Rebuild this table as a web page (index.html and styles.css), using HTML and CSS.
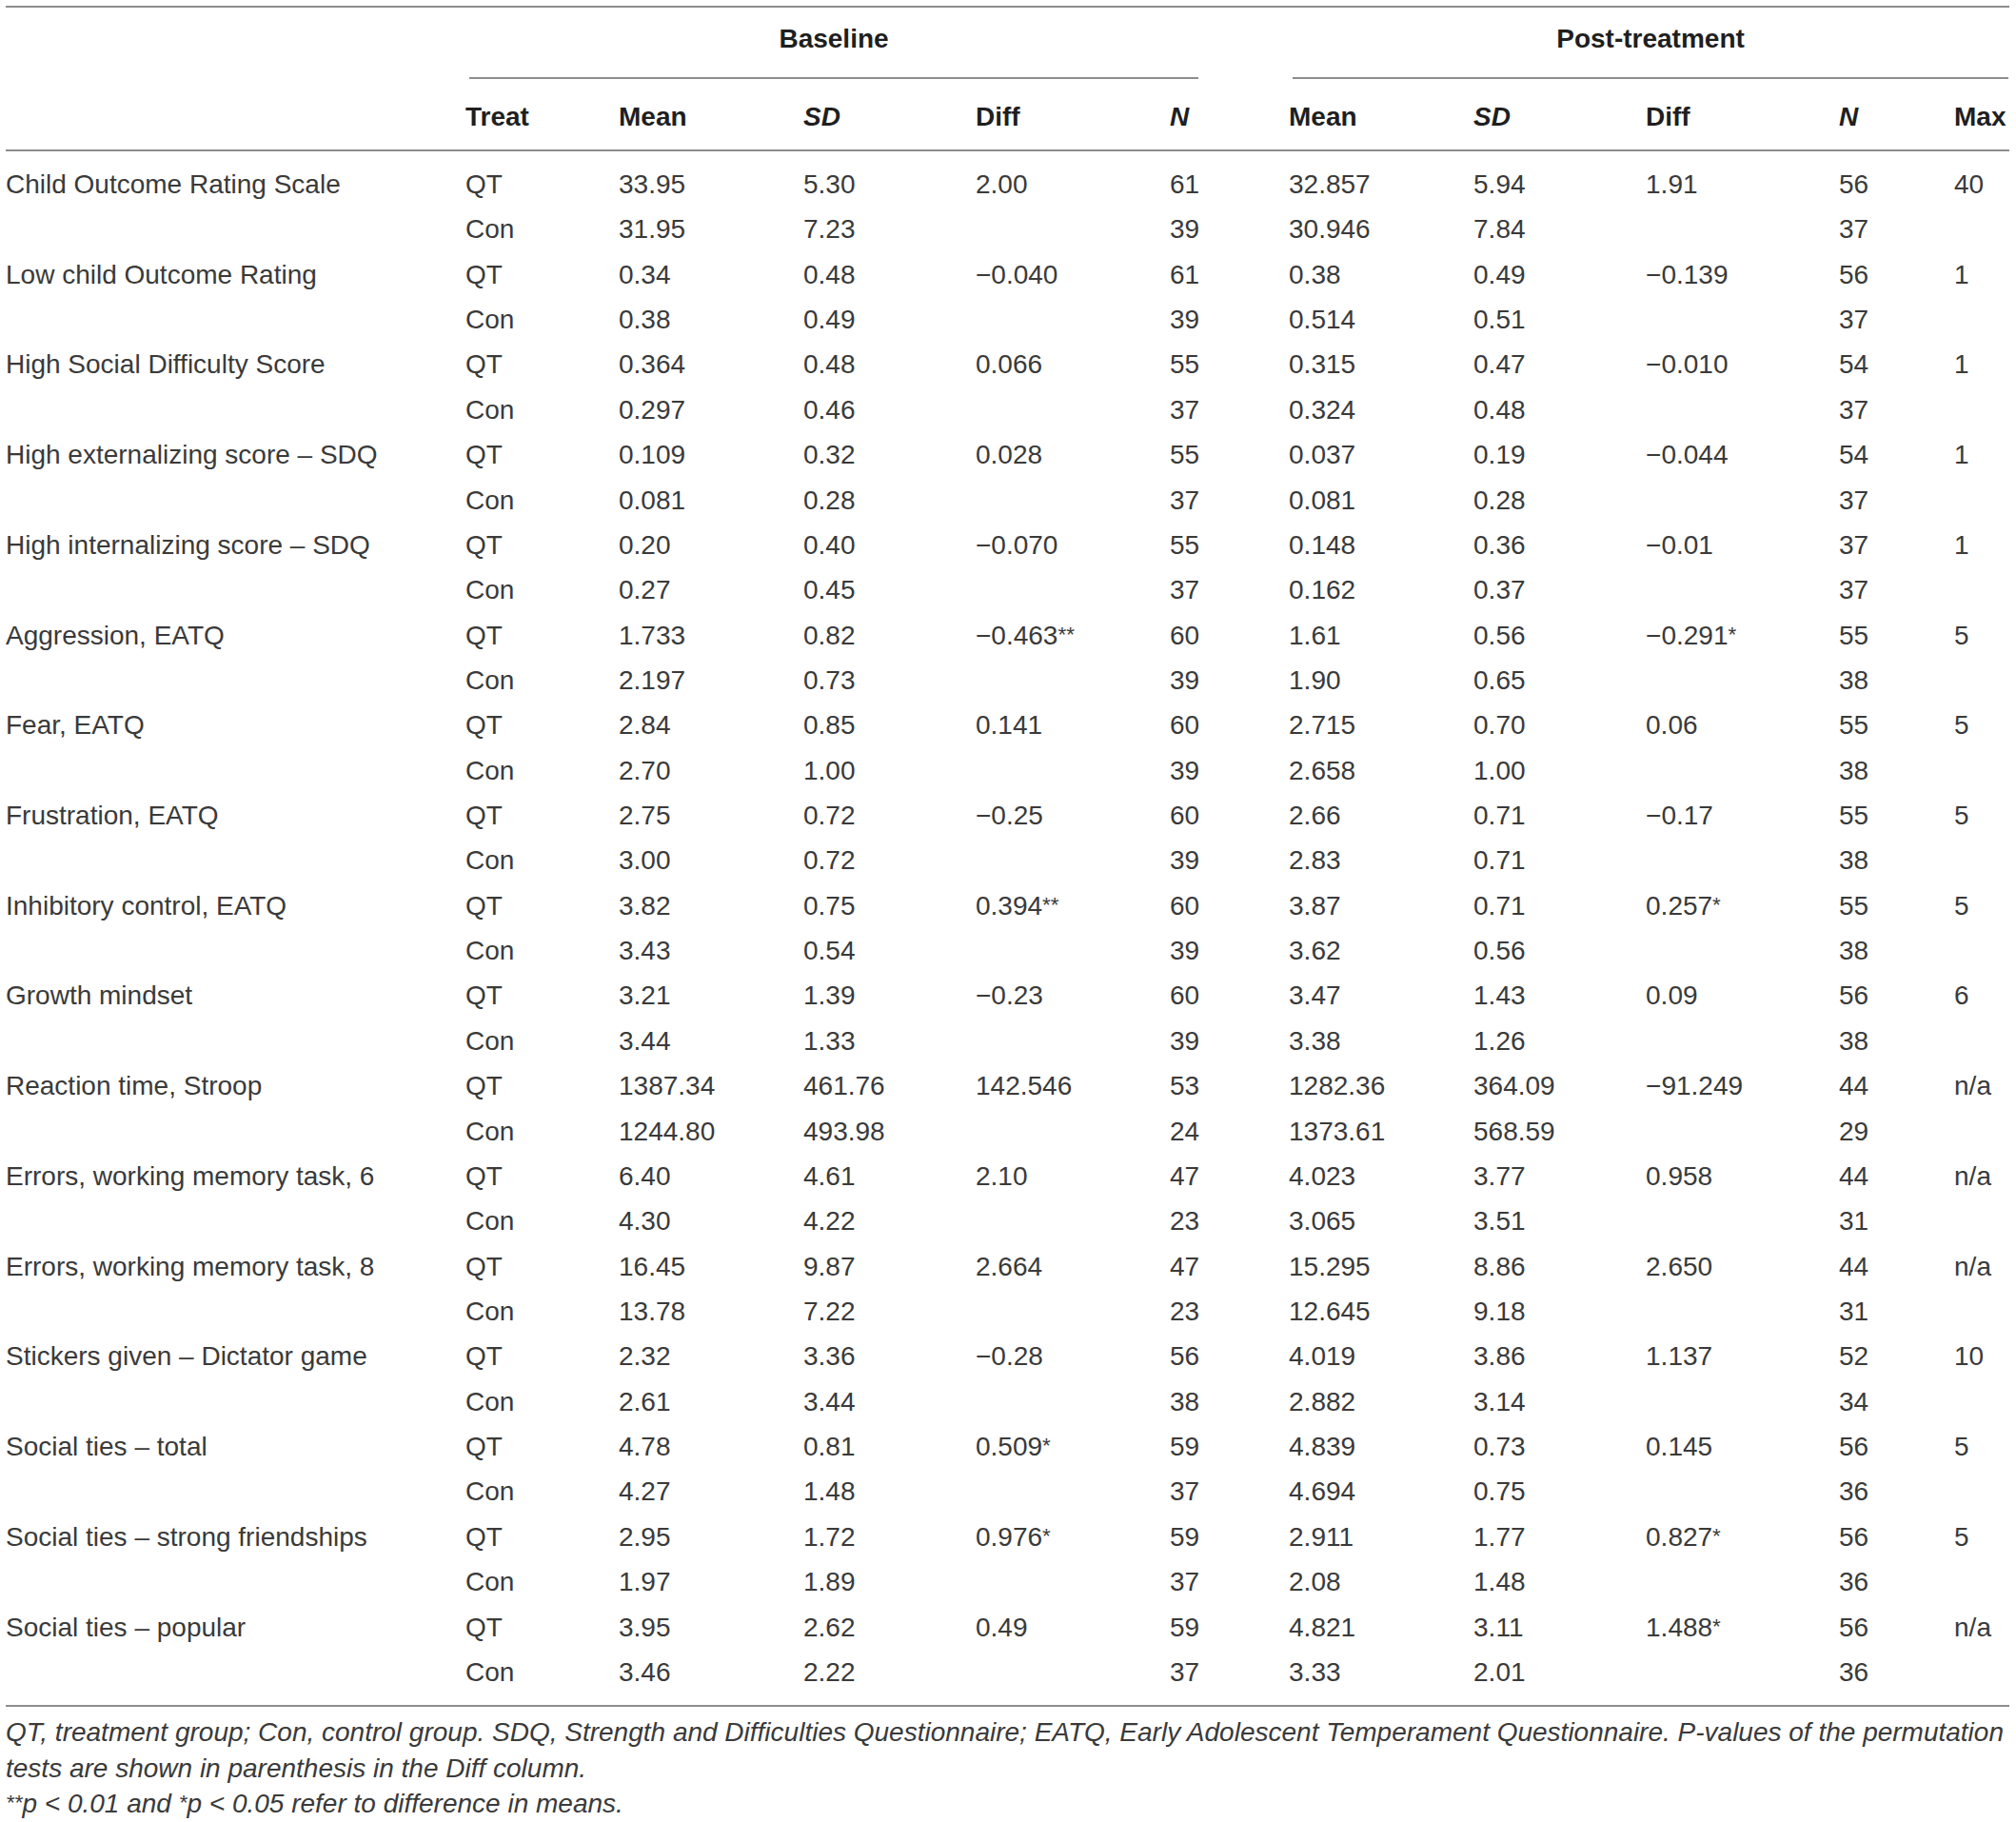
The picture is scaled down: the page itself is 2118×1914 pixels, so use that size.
FILE: index.html
```html
<!DOCTYPE html>
<html lang="en">
<head>
<meta charset="utf-8">
<title>Table</title>
<link rel="stylesheet" href="styles.css">
</head>
<body>
<table class="tbl">
  <colgroup>
    <col class="c-label"><col class="c-treat"><col class="c-mean"><col class="c-sd"><col class="c-diff"><col class="c-n">
    <col class="c-mean"><col class="c-sd"><col class="c-pdiff"><col class="c-pn"><col class="c-max">
  </colgroup>
  <thead>
    <tr class="grp">
      <th></th>
      <th colspan="5"><div class="grp-line grp-base">Baseline</div></th>
      <th colspan="5"><div class="grp-line grp-post">Post-treatment</div></th>
    </tr>
    <tr class="hdr">
      <th></th><th>Treat</th><th>Mean</th><th><i>SD</i></th><th>Diff</th><th><i>N</i></th>
      <th>Mean</th><th><i>SD</i></th><th>Diff</th><th><i>N</i></th><th>Max</th>
    </tr>
  </thead>
  <tbody>
    <tr class="first"><td>Child Outcome Rating Scale</td><td>QT</td><td>33.95</td><td>5.30</td><td>2.00</td><td>61</td><td>32.857</td><td>5.94</td><td>1.91</td><td>56</td><td>40</td></tr>
    <tr><td></td><td>Con</td><td>31.95</td><td>7.23</td><td></td><td>39</td><td>30.946</td><td>7.84</td><td></td><td>37</td><td></td></tr>
    <tr><td>Low child Outcome Rating</td><td>QT</td><td>0.34</td><td>0.48</td><td>−0.040</td><td>61</td><td>0.38</td><td>0.49</td><td>−0.139</td><td>56</td><td>1</td></tr>
    <tr><td></td><td>Con</td><td>0.38</td><td>0.49</td><td></td><td>39</td><td>0.514</td><td>0.51</td><td></td><td>37</td><td></td></tr>
    <tr><td>High Social Difficulty Score</td><td>QT</td><td>0.364</td><td>0.48</td><td>0.066</td><td>55</td><td>0.315</td><td>0.47</td><td>−0.010</td><td>54</td><td>1</td></tr>
    <tr><td></td><td>Con</td><td>0.297</td><td>0.46</td><td></td><td>37</td><td>0.324</td><td>0.48</td><td></td><td>37</td><td></td></tr>
    <tr><td>High externalizing score – SDQ</td><td>QT</td><td>0.109</td><td>0.32</td><td>0.028</td><td>55</td><td>0.037</td><td>0.19</td><td>−0.044</td><td>54</td><td>1</td></tr>
    <tr><td></td><td>Con</td><td>0.081</td><td>0.28</td><td></td><td>37</td><td>0.081</td><td>0.28</td><td></td><td>37</td><td></td></tr>
    <tr><td>High internalizing score – SDQ</td><td>QT</td><td>0.20</td><td>0.40</td><td>−0.070</td><td>55</td><td>0.148</td><td>0.36</td><td>−0.01</td><td>37</td><td>1</td></tr>
    <tr><td></td><td>Con</td><td>0.27</td><td>0.45</td><td></td><td>37</td><td>0.162</td><td>0.37</td><td></td><td>37</td><td></td></tr>
    <tr><td>Aggression, EATQ</td><td>QT</td><td>1.733</td><td>0.82</td><td>−0.463<sup>**</sup></td><td>60</td><td>1.61</td><td>0.56</td><td>−0.291<sup>*</sup></td><td>55</td><td>5</td></tr>
    <tr><td></td><td>Con</td><td>2.197</td><td>0.73</td><td></td><td>39</td><td>1.90</td><td>0.65</td><td></td><td>38</td><td></td></tr>
    <tr><td>Fear, EATQ</td><td>QT</td><td>2.84</td><td>0.85</td><td>0.141</td><td>60</td><td>2.715</td><td>0.70</td><td>0.06</td><td>55</td><td>5</td></tr>
    <tr><td></td><td>Con</td><td>2.70</td><td>1.00</td><td></td><td>39</td><td>2.658</td><td>1.00</td><td></td><td>38</td><td></td></tr>
    <tr><td>Frustration, EATQ</td><td>QT</td><td>2.75</td><td>0.72</td><td>−0.25</td><td>60</td><td>2.66</td><td>0.71</td><td>−0.17</td><td>55</td><td>5</td></tr>
    <tr><td></td><td>Con</td><td>3.00</td><td>0.72</td><td></td><td>39</td><td>2.83</td><td>0.71</td><td></td><td>38</td><td></td></tr>
    <tr><td>Inhibitory control, EATQ</td><td>QT</td><td>3.82</td><td>0.75</td><td>0.394<sup>**</sup></td><td>60</td><td>3.87</td><td>0.71</td><td>0.257<sup>*</sup></td><td>55</td><td>5</td></tr>
    <tr><td></td><td>Con</td><td>3.43</td><td>0.54</td><td></td><td>39</td><td>3.62</td><td>0.56</td><td></td><td>38</td><td></td></tr>
    <tr><td>Growth mindset</td><td>QT</td><td>3.21</td><td>1.39</td><td>−0.23</td><td>60</td><td>3.47</td><td>1.43</td><td>0.09</td><td>56</td><td>6</td></tr>
    <tr><td></td><td>Con</td><td>3.44</td><td>1.33</td><td></td><td>39</td><td>3.38</td><td>1.26</td><td></td><td>38</td><td></td></tr>
    <tr><td>Reaction time, Stroop</td><td>QT</td><td>1387.34</td><td>461.76</td><td>142.546</td><td>53</td><td>1282.36</td><td>364.09</td><td>−91.249</td><td>44</td><td>n/a</td></tr>
    <tr><td></td><td>Con</td><td>1244.80</td><td>493.98</td><td></td><td>24</td><td>1373.61</td><td>568.59</td><td></td><td>29</td><td></td></tr>
    <tr><td>Errors, working memory task, 6</td><td>QT</td><td>6.40</td><td>4.61</td><td>2.10</td><td>47</td><td>4.023</td><td>3.77</td><td>0.958</td><td>44</td><td>n/a</td></tr>
    <tr><td></td><td>Con</td><td>4.30</td><td>4.22</td><td></td><td>23</td><td>3.065</td><td>3.51</td><td></td><td>31</td><td></td></tr>
    <tr><td>Errors, working memory task, 8</td><td>QT</td><td>16.45</td><td>9.87</td><td>2.664</td><td>47</td><td>15.295</td><td>8.86</td><td>2.650</td><td>44</td><td>n/a</td></tr>
    <tr><td></td><td>Con</td><td>13.78</td><td>7.22</td><td></td><td>23</td><td>12.645</td><td>9.18</td><td></td><td>31</td><td></td></tr>
    <tr><td>Stickers given – Dictator game</td><td>QT</td><td>2.32</td><td>3.36</td><td>−0.28</td><td>56</td><td>4.019</td><td>3.86</td><td>1.137</td><td>52</td><td>10</td></tr>
    <tr><td></td><td>Con</td><td>2.61</td><td>3.44</td><td></td><td>38</td><td>2.882</td><td>3.14</td><td></td><td>34</td><td></td></tr>
    <tr><td>Social ties – total</td><td>QT</td><td>4.78</td><td>0.81</td><td>0.509<sup>*</sup></td><td>59</td><td>4.839</td><td>0.73</td><td>0.145</td><td>56</td><td>5</td></tr>
    <tr><td></td><td>Con</td><td>4.27</td><td>1.48</td><td></td><td>37</td><td>4.694</td><td>0.75</td><td></td><td>36</td><td></td></tr>
    <tr><td>Social ties – strong friendships</td><td>QT</td><td>2.95</td><td>1.72</td><td>0.976<sup>*</sup></td><td>59</td><td>2.911</td><td>1.77</td><td>0.827<sup>*</sup></td><td>56</td><td>5</td></tr>
    <tr><td></td><td>Con</td><td>1.97</td><td>1.89</td><td></td><td>37</td><td>2.08</td><td>1.48</td><td></td><td>36</td><td></td></tr>
    <tr><td>Social ties – popular</td><td>QT</td><td>3.95</td><td>2.62</td><td>0.49</td><td>59</td><td>4.821</td><td>3.11</td><td>1.488<sup>*</sup></td><td>56</td><td>n/a</td></tr>
    <tr class="last"><td></td><td>Con</td><td>3.46</td><td>2.22</td><td></td><td>37</td><td>3.33</td><td>2.01</td><td></td><td>36</td><td></td></tr>
  </tbody>
</table>
<div class="note">
  <p>QT, treatment group; Con, control group. SDQ, Strength and Difficulties Questionnaire; EATQ, Early Adolescent Temperament Questionnaire. P-values of the permutation<br>tests are shown in parenthesis in the Diff column.</p>
  <p><sup>**</sup>p &lt; 0.01 and <sup>*</sup>p &lt; 0.05 refer to difference in means.</p>
</div>
</body>
</html>
```

FILE: styles.css
```css
html, body {
  background: #ffffff;
}
body {
  margin: 0;
  padding: 0 7px 0 6px;
  font-family: "Liberation Sans", Arial, Helvetica, sans-serif;
  font-size: 28px;
  color: #3a3a3a;
}
.tbl {
  width: 2105px;
  table-layout: fixed;
  border-collapse: separate;
  border-spacing: 0;
  margin-top: 6px;
  border-top: 2px solid #8d8d8d;
}
.c-label { width: 483px; }
.c-treat { width: 161px; }
.c-mean { width: 194px; }
.c-sd { width: 181px; }
.c-diff { width: 204px; }
.c-n { width: 125px; }
.c-pdiff { width: 203px; }
.c-pn { width: 121px; }
.c-max { width: 58px; }

th, td {
  padding: 0;
  text-align: left;
  white-space: nowrap;
  line-height: 32px;
}
th {
  font-weight: bold;
  color: #1f1f1f;
}
.grp th {
  padding-top: 17px;
  text-align: center;
}
.grp-line {
  padding-bottom: 24px;
  border-bottom: 2px solid #8d8d8d;
  margin-left: 4px;
}
.grp-base { margin-right: 95px; }
.grp-post { margin-right: 1px; }
.hdr th {
  padding: 24px 0 18px;
  border-bottom: 2px solid #8d8d8d;
}
.hdr th i { font-style: italic; }
tbody td {
  line-height: 47.36px;
  font-weight: normal;
}
tbody tr.first td { padding-top: 11px; }
tbody tr.last td {
  padding-bottom: 11px;
  border-bottom: 2px solid #8d8d8d;
}
sup {
  font-size: 0.8em;
  line-height: 0;
  vertical-align: 0.12em;
}
.note {
  font-style: italic;
  line-height: 37.5px;
  margin-top: 8px;
}
.note p {
  margin: 0;
}
```
